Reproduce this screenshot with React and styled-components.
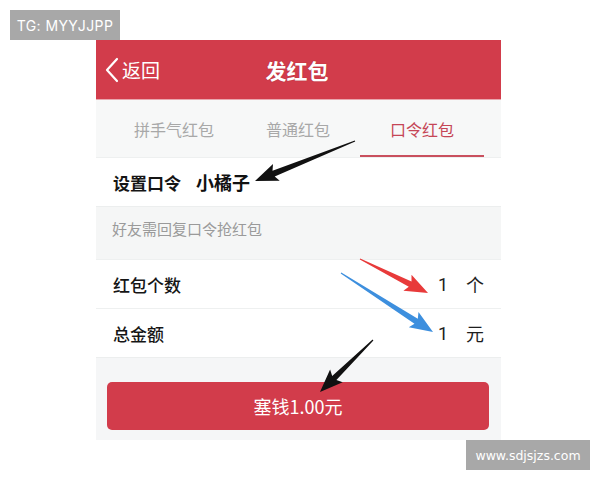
import styled, { createGlobalStyle } from "styled-components";

const GlobalStyle = createGlobalStyle`
    html, body {
        margin: 0;
        padding: 0;
        background: #ffffff;
    }
    body {
        font-family: Roboto, "Noto Sans CJK SC", sans-serif;
    }
`;

const RED = "#d23c4b";

const arrows = [
    { from: [355, 141], to: [255, 181], color: "#111111" },
    { from: [360, 259], to: [428, 293], color: "#e83a3a" },
    { from: [341, 273], to: [433, 332], color: "#3d8fde" },
    { from: [373, 340], to: [320, 392], color: "#111111" },
];

// tapered shaft + head, pointing from tail to tip
const arrowPoints = ([x1, y1], [x2, y2]) => {
    const dx = x2 - x1;
    const dy = y2 - y1;
    const len = Math.hypot(dx, dy);
    const ux = dx / len;
    const uy = dy / len;
    const nx = -uy;
    const ny = ux;
    const headLen = 20;
    const headW = 9;
    const neckW = 3;
    const bx = x2 - ux * headLen;
    const by = y2 - uy * headLen;
    const p = (x, y) => `${x.toFixed(1)},${y.toFixed(1)}`;
    return [
        p(x1 + nx * 0.5, y1 + ny * 0.5),
        p(bx + nx * neckW, by + ny * neckW),
        p(bx - ux * 3 + nx * headW, by - uy * 3 + ny * headW),
        p(x2, y2),
        p(bx - ux * 3 - nx * headW, by - uy * 3 - ny * headW),
        p(bx - nx * neckW, by - ny * neckW),
        p(x1 - nx * 0.5, y1 - ny * 0.5),
    ].join(" ");
};

const App = () => {
    return (
        <Page>
            <GlobalStyle />
            <Badge>TG: MYYJJPP</Badge>
            <Phone>
                <Header>
                    <Back>
                        <svg width="14" height="26" viewBox="0 0 14 26">
                            <path d="M12 2 L2 13 L12 24" fill="none" stroke="#fff" strokeWidth="2.2" strokeLinecap="round" strokeLinejoin="round" />
                        </svg>
                        返回
                    </Back>
                    <Title>发红包</Title>
                </Header>
                <Tabs>
                    <Tab>拼手气红包</Tab>
                    <Tab>普通红包</Tab>
                    <Tab active>口令红包</Tab>
                </Tabs>
                <Row>
                    <Label bold>设置口令</Label>
                    <Password>小橘子</Password>
                </Row>
                <Hint>好友需回复口令抢红包</Hint>
                <Row divider>
                    <Label>红包个数</Label>
                    <Value>1<Unit>个</Unit></Value>
                </Row>
                <Row>
                    <Label>总金额</Label>
                    <Value>1<Unit>元</Unit></Value>
                </Row>
                <Footer>
                    <SubmitButton>塞钱1.00元</SubmitButton>
                </Footer>
            </Phone>
            <BottomBar>
                <Watermark>www.sdjsjzs.com</Watermark>
            </BottomBar>
            <Overlay width="600" height="480" viewBox="0 0 600 480">
                {arrows.map((a, i) => (
                    <polygon key={i} points={arrowPoints(a.from, a.to)} fill={a.color} />
                ))}
            </Overlay>
        </Page>
    );
};

const Page = styled.div`
    position: relative;
    width: 600px;
    height: 480px;
    padding-top: 10px;
    box-sizing: border-box;
    overflow: hidden;
`;

const Badge = styled.div`
    margin-left: 10px;
    width: 110px;
    height: 30px;
    background: #a8a8a8;
    color: #ffffff;
    font-family: Inter, "DejaVu Sans", sans-serif;
    font-size: 14px;
    font-weight: 400;
    display: flex;
    align-items: center;
    justify-content: center;
    letter-spacing: 0.4px;
`;

const Phone = styled.div`
    margin-left: 96px;
    width: 405px;
    display: flex;
    flex-direction: column;
    background: #ffffff;
`;

const Header = styled.div`
    position: relative;
    height: 59px;
    background: ${RED};
    display: flex;
    align-items: center;
    justify-content: center;
    border-bottom: 1px solid #e9a7ae;
`;

const Back = styled.div`
    position: absolute;
    left: 9px;
    top: 0;
    bottom: 0;
    display: flex;
    align-items: center;
    gap: 3px;
    color: #ffffff;
    font-family: "Noto Sans CJK SC", sans-serif;
    font-size: 19px;
`;

const Title = styled.div`
    color: #ffffff;
    font-family: "Noto Sans CJK SC", sans-serif;
    font-size: 21px;
    font-weight: 700;
    margin-left: -3px;
    text-shadow: 0 0 1px rgba(120, 20, 30, 0.6);
`;

const Tabs = styled.div`
    height: 57px;
    background: #f7f8f8;
    display: flex;
    padding-left: 16px;
    box-sizing: border-box;
`;

const Tab = styled.div`
    width: 124px;
    display: flex;
    align-items: center;
    justify-content: center;
    font-family: "Noto Sans CJK SC", sans-serif;
    font-size: 16px;
    color: ${(p) => (p.active ? "#c54656" : "#a8a8a8")};
    border-bottom: 2px solid ${(p) => (p.active ? "#c9505e" : "transparent")};
    box-sizing: border-box;
    padding-top: 3px;
`;

const Row = styled.div`
    position: relative;
    height: 48px;
    display: flex;
    align-items: center;
    padding: 0 17px;
    background: #ffffff;
    border-top: 1px solid #eef0f0;
    &::after {
        content: "";
        display: ${(p) => (p.divider ? "block" : "none")};
        position: absolute;
        left: 17px;
        right: 0;
        bottom: -1px;
        height: 1px;
        background: #eceeee;
    }
`;

const Label = styled.div`
    font-family: "Noto Sans CJK SC", sans-serif;
    font-size: 17px;
    font-weight: ${(p) => (p.bold ? 700 : 500)};
    color: #151515;
`;

const Password = styled.div`
    margin-left: 15px;
    font-family: "Noto Sans CJK SC", sans-serif;
    font-size: 18px;
    font-weight: 700;
    color: #111111;
`;

const Hint = styled.div`
    height: 53px;
    display: flex;
    align-items: center;
    padding: 0 16px 9px;
    background: #f5f6f6;
    border-top: 1px solid #eceeee;
    font-family: "Noto Sans CJK SC", sans-serif;
    font-size: 15px;
    color: #9a9a9a;
    box-sizing: border-box;
`;

const Value = styled.div`
    margin-left: auto;
    display: flex;
    align-items: center;
    gap: 18px;
    font-family: Roboto, "Noto Sans CJK SC", sans-serif;
    font-size: 18px;
    color: #1e1e1e;
`;

const Unit = styled.span`
    font-family: "Noto Sans CJK SC", sans-serif;
    font-size: 18px;
`;

const Footer = styled.div`
    height: 83px;
    background: #f5f6f7;
    border-top: 1px solid #eceeee;
    box-sizing: border-box;
    padding: 24px 12px 0 11px;
`;

const SubmitButton = styled.div`
    height: 48px;
    border-radius: 5px;
    background: ${RED};
    color: #ffffff;
    display: flex;
    align-items: center;
    justify-content: center;
    font-family: "Noto Sans CJK SC", Roboto, sans-serif;
    font-size: 18px;
`;

const BottomBar = styled.div`
    display: flex;
    justify-content: flex-end;
    padding-right: 10px;
`;

const Watermark = styled.div`
    width: 124px;
    height: 30px;
    background: #a8a8a8;
    color: #ffffff;
    font-family: "DejaVu Sans", sans-serif;
    font-size: 12.5px;
    display: flex;
    align-items: center;
    justify-content: center;
`;

const Overlay = styled.svg`
    position: absolute;
    top: 0;
    left: 0;
    pointer-events: none;
`;

export default App;
